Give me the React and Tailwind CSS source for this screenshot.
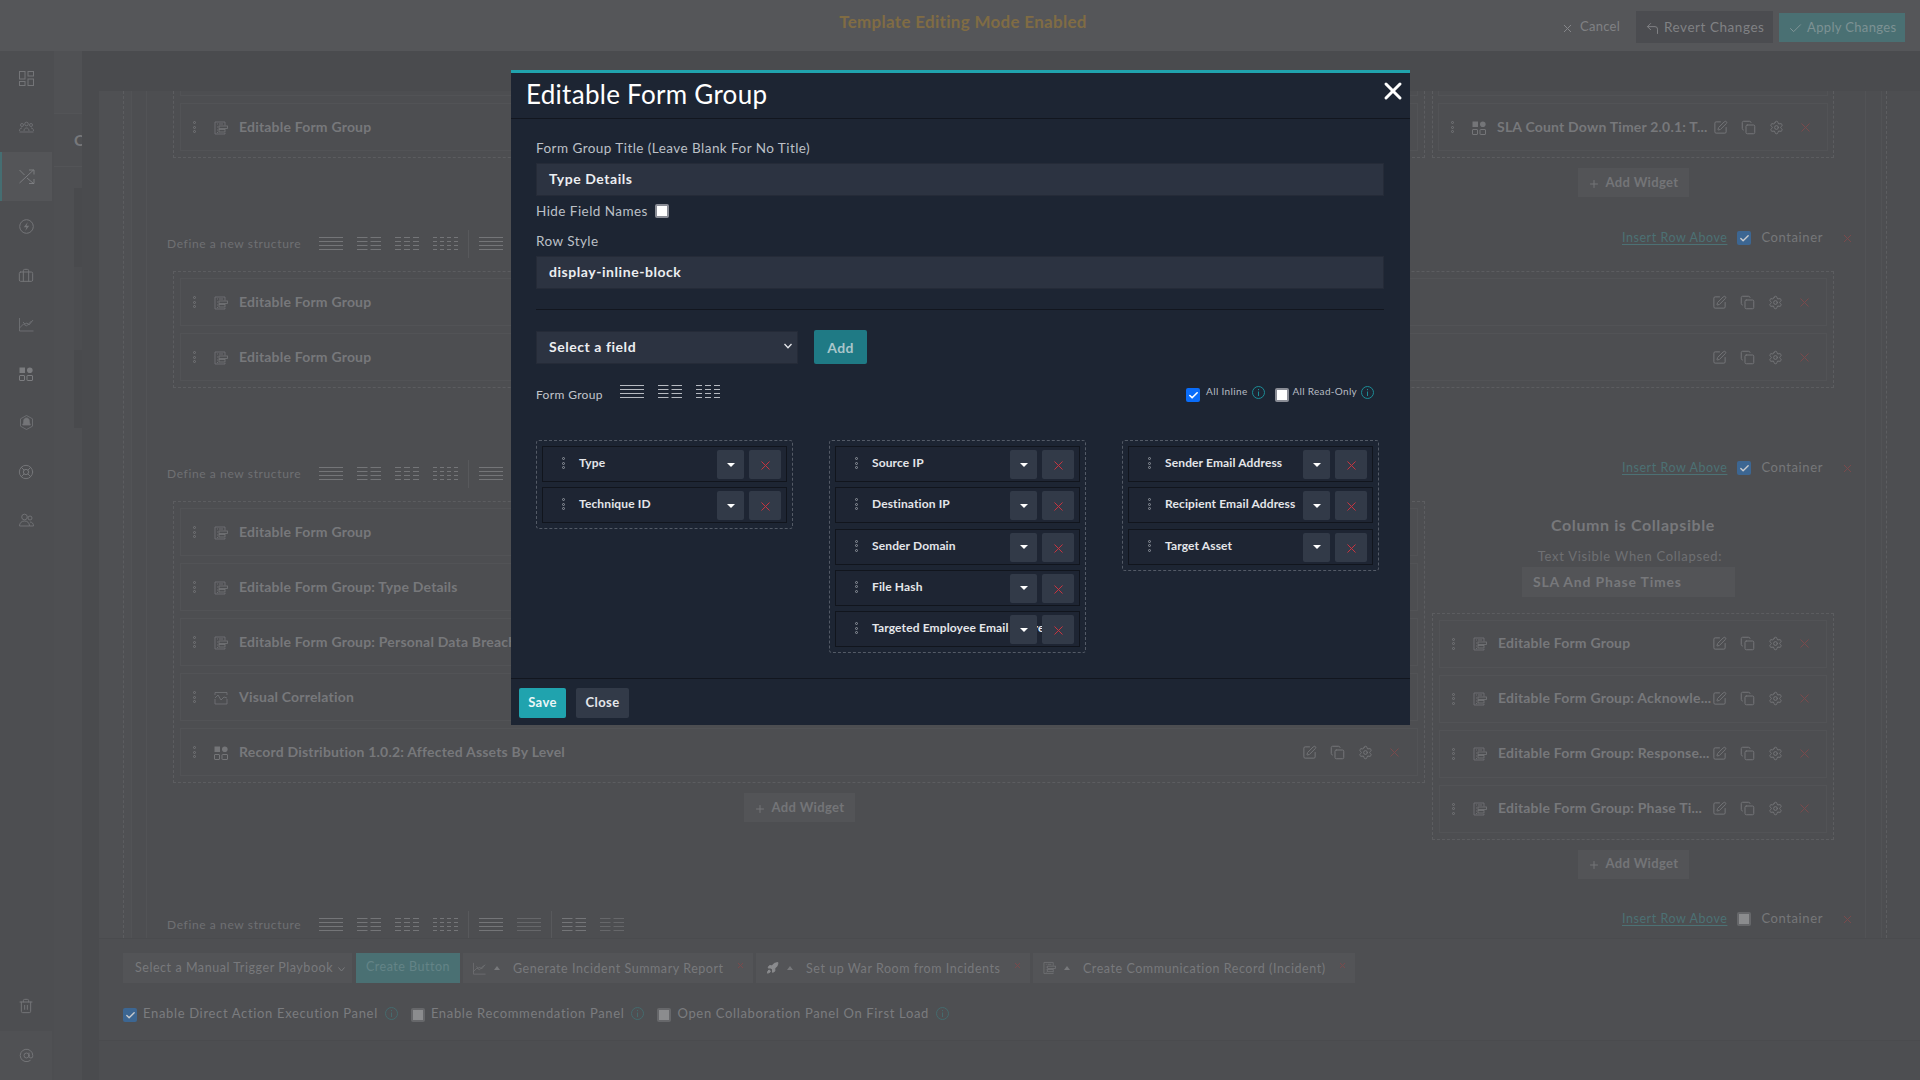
import React from 'react';
import { Briefcase, LifeBuoy, Trash2, AtSign, Rocket, Plus, X, Check, Settings, SquarePen, Copy, CornerUpLeft } from 'lucide-react';

const dim = '#747578';

// widget icon: two solid marks over two outlined boxes
const WidgetIcon = ({ color = dim }) => (
  <svg width="14" height="14" viewBox="0 0 14 14" fill="none" stroke={color}>
    <rect x="0.5" y="0.5" width="5.5" height="5.5" fill={color} stroke="none" />
    <circle cx="10.8" cy="3.2" r="2.8" fill={color} stroke="none" />
    <rect x="0.5" y="8.5" width="5" height="5" rx="0.5" />
    <rect x="8" y="8.5" width="5.5" height="5" rx="0.5" />
  </svg>
);

const FormIcon = () => (
  <svg width="14" height="14" viewBox="0 0 14 14" fill="none" stroke={dim} strokeWidth="0.8">
    <path d="M1 1h10v3.500M1 1v12h10v-1" />
    <path d="M3 3h1M5 3h4M3 6h1M3 9h1M3 11.500h1" />
    <rect x="5" y="5" width="8.500" height="2.500" />
    <rect x="5" y="8.500" width="6" height="2.500" />
  </svg>
);

const CorrelationIcon = () => (
  <svg width="14" height="14" viewBox="0 0 14 14" fill="none" stroke={dim} strokeWidth="0.8">
    <path d="M1 4V1.500h12V4M1 8v5h12V8" />
    <path d="M1 7l3-3 3 5 3-3 3 1" />
  </svg>
);

const ChartIcon = ({ size = 15 }) => (
  <svg width={size} height={size} viewBox="0 0 15 15" fill="none" stroke={dim} strokeWidth="0.8">
    <path d="M.5 1v13h14M.5 11l4-4 3 2 5-5" />
    <path d="M4 5l2 2 2-1 2 2 4-5" />
  </svg>
);

// column layout glyph used by the structure pickers
const Struct = ({ cols = 1, color = dim, size = 24 }) => {
  const gap = 3;
  const w = (size - gap * (cols - 1)) / cols;
  return (
    <svg width={size} height="14" viewBox={`0 0 ${size} 14`} stroke={color} strokeWidth="1">
      {[0.5, 4.5, 8.5, 12.5].map(y => Array.from({ length: cols }).map((_, i) => (
        <line key={`${y}-${i}`} x1={i * (w + gap)} x2={i * (w + gap) + w} y1={y} y2={y} />
      )))}
    </svg>
  );
};

const Grip = ({ color = dim, size = 3 }) => (
  <div className="flex flex-col gap-[1.500px]">
    {[0, 1, 2].map(i => <span key={i} className="block rounded-full border" style={{ width: size, height: size, borderColor: color }} />)}
  </div>
);

const InfoIcon = ({ color = '#1d8c96', size = 13 }) => (
  <svg width={size} height={size} viewBox="0 0 13 13" fill="none" stroke={color} strokeWidth="1">
    <circle cx="6.500" cy="6.500" r="6" />
    <path d="M6.500 5.500v4.500M6.500 3v1.200" />
  </svg>
);

const Box = ({ checked, dimmed }) => {
  if (dimmed) {
    return (
      <span className={`w-[14px] h-[14px] rounded-[2px] flex items-center justify-center shrink-0 ${checked ? 'bg-[#3c6692]' : 'bg-[#8b8c8e] border-2 border-[#66676a]'}`}>
        {checked && <Check size={11} strokeWidth={3} color="#c9cacc" />}
      </span>
    );
  }
  return (
    <span className={`w-[14px] h-[14px] rounded-[2px] flex items-center justify-center shrink-0 ${checked ? 'bg-[#0a6dfa]' : 'bg-white border-2 border-[#8a8d96]'}`}>
      {checked && <Check size={11} strokeWidth={3.500} color="#fff" />}
    </span>
  );
};

const Actions = ({ pr = 'pr-[14px]' }) => (
  <div className={`ml-auto flex items-center gap-[13px] shrink-0 ${pr}`}>
    <SquarePen size={15} strokeWidth={1} absoluteStrokeWidth color={dim} />
    <Copy size={15} strokeWidth={1} absoluteStrokeWidth color={dim} />
    <Settings size={15} strokeWidth={1} absoluteStrokeWidth color={dim} />
    <X size={15} strokeWidth={1} absoluteStrokeWidth color="#7a4a4c" className="ml-[1px]" />
  </div>
);

const Card = ({ title, icon = <FormIcon />, actions = true, pr }) => (
  <div className="h-[48px] border border-[#525356] flex items-center shrink-0">
    <div className="ml-[12px] w-[21px] shrink-0"><Grip /></div>
    <div className="w-[14px] h-[14px] shrink-0 mt-[1px]">{icon}</div>
    <span className="ml-[11px] text-[14px] font-bold tracking-[0.2px] text-[#77787b] whitespace-nowrap shrink-0 -mt-[2px]">{title}</span>
    {actions && <Actions pr={pr} />}
  </div>
);

const AddWidget = () => (
  <div className="mx-auto w-[111px] h-[29px] bg-[#535457] flex items-center justify-center gap-[6px] text-[13px] font-bold tracking-[0.35px] text-[#747578]">
    <Plus size={12} strokeWidth={1} absoluteStrokeWidth color={dim} className="mt-[2px]" /> Add Widget
  </div>
);

// "Define a new structure" strip, with the row options on its right
const DefineRow = ({ checked }) => (
  <div className="h-[28px] flex items-center pl-[20px] pr-[11px] shrink-0">
    <span className="text-[12px] tracking-[0.62px] text-[#6f7073] w-[152px] shrink-0">Define a new structure</span>
    <div className="flex items-center gap-[14px] h-[28px]">
      <Struct cols={1} /><Struct cols={2} /><Struct cols={3} /><Struct cols={4} size={25} />
      <span className="w-px h-full bg-[#58595c] -mx-[4px]" />
      <Struct cols={1} /><Struct cols={1} color="#66676a" />
      <span className="w-px h-full bg-[#58595c] -mx-[4px]" />
      <Struct cols={2} /><Struct cols={2} color="#66676a" />
    </div>
    <div className="ml-auto flex items-center pb-[12px]">
      <span className="text-[12.500px] tracking-[0.55px] text-[#4c7174] underline underline-offset-2">Insert Row Above</span>
      <span className="ml-[10px]"><Box checked={checked} dimmed /></span>
      <span className="ml-[10px] text-[13px] tracking-[0.6px] text-[#767779]">Container</span>
      <X size={13} strokeWidth={1} absoluteStrokeWidth color="#7a4a4c" className="ml-[18px]" />
    </div>
  </div>
);

const sideTop = [
  <svg width="15" height="15" viewBox="0 0 15 15" fill="none" stroke={dim}><rect x=".5" y=".5" width="5.500" height="7.500" /><rect x="9" y=".5" width="5.500" height="4.500" /><rect x=".5" y="10.500" width="5.500" height="4" /><rect x="9" y="8" width="5.500" height="6.500" /></svg>,
  <svg width="15" height="15" viewBox="0 0 15 15" fill="none" stroke={dim} strokeWidth=".8"><circle cx="3" cy="5" r="1.500" /><circle cx="7.500" cy="4" r="1.800" /><circle cx="12" cy="5" r="1.500" /><path d="M.5 11c0-2 1-3 2.500-3M5 11c0-2 1-3 2.500-3s2.500 1 2.500 3M12 8c1.500 0 2.500 1 2.500 3M.5 12h14" /></svg>,
  <svg width="16" height="15" viewBox="0 0 16 15" fill="none" stroke="#808184" strokeWidth=".9"><path d="M.5 1l5 5M8 9l6.500 5.500M.5 14l14-13M10 1h5v4.500M15 10v4.500h-5" /></svg>,
  <svg width="15" height="15" viewBox="0 0 15 15" fill="none" stroke={dim}><circle cx="7.500" cy="7.500" r="6.800" /><path d="M8.800 3L4.800 8.300h2.700L6.200 12l4-5.300H7.500z" fill={dim} stroke="none" /></svg>,
  <Briefcase size={16} strokeWidth={1} absoluteStrokeWidth color={dim} />,
  <ChartIcon />,
  <WidgetIcon color="#7b7c7f" />,
  <svg width="15" height="15" viewBox="0 0 15 15" fill="none" stroke={dim} strokeWidth=".8"><path d="M7.500.5l6 3.300v7.400l-6 3.300-6-3.300V3.800z" /><path d="M7.500 3c2 0 2.800 1.500 2.800 3.500s1 2.500 1 3.500h-7.600c0-1 1-1.500 1-3.500S5.500 3 7.500 3z" fill={dim} /></svg>,
  <LifeBuoy size={16} strokeWidth={1} absoluteStrokeWidth color={dim} />,
  <svg width="15" height="15" viewBox="0 0 15 15" fill="none" stroke={dim} strokeWidth=".9"><circle cx="5.500" cy="4" r="2.800" /><circle cx="11" cy="5" r="2" /><path d="M.5 13c0-3 2-5 5-5s5 2 5 5zM11 9c2 0 3.500 1.500 3.500 4h-4" /></svg>,
];

const Bar = ({ children, className = '' }) => (
  <div className={`h-[30px] bg-[#535457] flex items-center text-[12.500px] tracking-[0.55px] text-[#78797c] ${className}`}>{children}</div>
);

const Chip = ({ icon, label, w }) => (
  <Bar className={w}>
    <span className="ml-[10px] w-[13px] flex justify-center">{icon}</span>
    <span className="ml-[8px] border-x-[3.500px] border-b-[4px] border-x-transparent border-b-[#77787b]" />
    <span className="ml-[13px] mt-[2px] whitespace-nowrap">{label}</span>
    <X size={9} strokeWidth={1} absoluteStrokeWidth color="#7a4a4c" className="ml-auto mr-[8px] -mt-[5px]" />
  </Bar>
);

const Toggle = ({ checked, label, info = true, className = '' }) => (
  <div className={`flex items-center gap-[6px] ${className}`}>
    <span className="mt-[3px]"><Box checked={checked} dimmed /></span>
    <span className="text-[13px] tracking-[0.66px] text-[#7b7c7f] whitespace-nowrap">{label}</span>
    {info && <span className="ml-[1px]"><InfoIcon color="#456b6e" /></span>}
  </div>
);

// field row inside a form group column
const Field = ({ label }) => (
  <div className="h-[36px] border border-[#11151d] bg-[#1e2533] flex items-start relative overflow-hidden">
    <div className="ml-[19px] mt-[10px] w-[17px] shrink-0"><Grip color="#8e939c" size={3} /></div>
    <span className="mt-[7px] text-[12px] font-bold tracking-[0.13px] text-[#e4e6ea] whitespace-nowrap">{label}</span>
    <div className="absolute right-[5px] top-[3px] flex gap-[5px]">
      <span className="w-[27px] h-[29px] bg-[#323a48] rounded-[2px] flex items-center justify-center">
        <span className="border-x-[4px] border-t-[4px] border-x-transparent border-t-white" />
      </span>
      <span className="w-[32px] h-[29px] bg-[#323a48] rounded-[2px] flex items-center justify-center">
        <X size={15} strokeWidth={1} absoluteStrokeWidth color="#c8343f" className="mt-[2px]" />
      </span>
    </div>
  </div>
);

const FieldCol = ({ fields }) => (
  <div className="w-[257px] self-start border border-dashed border-[#535a66] rounded-[3px] p-[5px] flex flex-col gap-[5.250px]">
    {fields.map(f => <Field key={f} label={f} />)}
  </div>
);

const inputCls = 'h-[33px] bg-[#2c3341] border border-[#252b38] flex items-center pl-[12px] pb-[2px] text-[14px] font-bold tracking-[0.55px] text-[#eceef1]';
const labelCls = 'h-[20px] leading-[20px] text-[13.500px] tracking-[0.45px] text-[#bcc0c7]';

const Modal = () => (
  <div className="absolute left-[511px] top-[70px] w-[899px] h-[655px] bg-[#1d2533] border-t-[3px] border-[#20a3ae] flex flex-col">
    <div className="h-[46px] border-b border-[#12161f] flex items-center pl-[15px] pr-[3px] shrink-0">
      <span className="text-[26px] tracking-[0.28px] text-white -mt-[2px]">Editable Form Group</span>
      <X size={28} strokeWidth={3} absoluteStrokeWidth color="#fff" className="ml-auto -mt-[10px]" />
    </div>
    <div className="flex-1 px-[25px] pt-[19px]">
      <div className={labelCls}>Form Group Title (Leave Blank For No Title)</div>
      <div className={`${inputCls} mt-[5px] w-[848px]`}>Type Details</div>
      <div className="mt-[5px] flex items-center gap-[7px] h-[20px]">
        <span className={labelCls}>Hide Field Names</span><Box />
      </div>
      <div className={`${labelCls} mt-[10px]`}>Row Style</div>
      <div className={`${inputCls} mt-[5px] w-[848px]`}>display-inline-block</div>
      <div className="mt-[20px] h-px w-[848px] bg-[#12161f]" />
      <div className="mt-[20px] flex items-center gap-[16px]">
        <div className={`${inputCls} w-[262px]`}>
          Select a field
          <svg className="ml-auto mr-[5px]" width="8" height="6" viewBox="0 0 8 6" fill="none" stroke="#e4e6ea" strokeWidth="1.300"><path d="M.5 1L4 4.800 7.500 1" /></svg>
        </div>
        <div className="w-[53px] h-[34px] bg-[#1f7a85] rounded-[2px] flex items-center justify-center text-[14px] font-bold tracking-[0.4px] text-[#a9c6ca]">Add</div>
      </div>
      <div className="mt-[16px] h-[25px] w-[848px] flex items-start">
        <span className="mt-[6px] text-[12px] tracking-[0.35px] text-[#c2c6cc] w-[84px]">Form Group</span>
        <div className="mt-[5px] flex gap-[14px]">
          <Struct cols={1} color="#b6bac1" /><Struct cols={2} color="#b6bac1" /><Struct cols={3} color="#b6bac1" />
        </div>
        <div className="ml-auto mr-[10px] flex items-start mt-[8px]">
          <Box checked />
          <span className="ml-[6px] -mt-[4px] text-[10px] tracking-[0.35px] text-[#b7bcc3]">All Inline</span>
          <span className="ml-[4px] -mt-[2px]"><InfoIcon /></span>
          <span className="ml-[10px]"><Box /></span>
          <span className="ml-[4px] -mt-[4px] text-[10px] tracking-[0.3px] text-[#b7bcc3]">All Read-Only</span>
          <span className="ml-[4px] -mt-[2px]"><InfoIcon /></span>
        </div>
      </div>
      <div className="mt-[35px] flex gap-[36px]">
        <FieldCol fields={['Type', 'Technique ID']} />
        <FieldCol fields={['Source IP', 'Destination IP', 'Sender Domain', 'File Hash', 'Targeted Employee Email Address']} />
        <FieldCol fields={['Sender Email Address', 'Recipient Email Address', 'Target Asset']} />
      </div>
    </div>
    <div className="h-[47px] border-t border-[#12161f] shrink-0 flex items-start pt-[9px] pl-[8px] gap-[10px]">
      <span className="w-[47px] h-[30px] bg-[#20a3ae] rounded-[2px] flex items-center justify-center text-[13px] font-bold tracking-[0.4px] text-[#eaf6f7]">Save</span>
      <span className="w-[53px] h-[30px] bg-[#323a48] rounded-[2px] flex items-center justify-center text-[13px] font-bold tracking-[0.4px] text-[#e4e6ea]">Close</span>
    </div>
  </div>
);

export default function App() {
  return (
    <div className="relative w-[1920px] h-[1080px] overflow-hidden bg-[#4d4e51] font-['Lato',sans-serif]">
      {/* top bar */}
      <div className="h-[51px] bg-[#555659] flex items-start relative">
        <span className="w-[1926px] -mr-[1926px] mt-[9px] text-center text-[17px] font-bold tracking-[0.3px] text-[#806c44]">Template Editing Mode Enabled</span>
        <div className="ml-auto flex items-start pr-[15px] pt-[11px]">
          <div className="h-[32px] flex items-center">
            <X size={13} strokeWidth={1} absoluteStrokeWidth color="#85868a" className="mt-[3px]" />
            <span className="ml-[6px] text-[13px] tracking-[0.25px] text-[#808184]">Cancel</span>
          </div>
          <div className="ml-[16px] w-[137px] h-[32px] bg-[#4b4c50] flex items-center pl-[9px] text-[13.500px] tracking-[0.55px] text-[#808184]">
            <CornerUpLeft size={15} strokeWidth={1} absoluteStrokeWidth color="#808184" className="mt-[2px]" /><span className="ml-[4px]">Revert Changes</span>
          </div>
          <div className="ml-[6px] mt-[2px] w-[126px] h-[29px] bg-[#4a7073] flex items-center pl-[9px] text-[13px] tracking-[0.35px] text-[#7d9294]">
            <Check size={15} strokeWidth={1} absoluteStrokeWidth color="#809496" className="mt-[2px]" /><span className="ml-[4px]">Apply Changes</span>
          </div>
        </div>
      </div>

      <div className="flex h-[1029px]">
        {/* nav */}
        <div className="w-[52px] shrink-0 bg-[#4d4e51] flex flex-col pt-[3px]">
          {sideTop.map((icon, i) => (
            <div key={i} className={`h-[49px] flex items-center justify-center ${i === 2 ? 'bg-[#545558] border-l-2 border-[#456e72] h-[48px] mb-[1px]' : ''}`}>{icon}</div>
          ))}
          <div className="mt-auto h-[49px] mb-[1px] flex items-center justify-center"><Trash2 size={16} strokeWidth={1} absoluteStrokeWidth color={dim} /></div>
          <div className="h-[49px] bg-[#505154] flex items-center justify-center"><AtSign size={15} strokeWidth={1} absoluteStrokeWidth color={dim} /></div>
        </div>

        {/* collapsed secondary panel */}
        <div className="w-[28px] shrink-0 ml-[2px] flex flex-col bg-[#4e4f52]">
          <div className="h-[62px] bg-[#505154] shrink-0" />
          <div className="h-[54px] border-y border-[#535457] shrink-0 flex items-center justify-end overflow-hidden">
            <span className="text-[16px] font-bold text-[#77787b] w-[8px] overflow-hidden">C</span>
          </div>
          <div className="flex-1 flex justify-end pt-[21px]">
            <div className="w-[8px] h-[240px] bg-[#494a4d] flex items-center">
              <div className="w-full h-[83px] bg-[#4c4d50]" />
            </div>
          </div>
        </div>
        <div className="w-[17px] shrink-0 bg-[#4a4b4e]" />

        <div className="flex-1 min-w-0 flex flex-col">
          <div className="h-[40px] shrink-0 bg-[#4a4b4e]" />
          <div className="h-[847px] shrink-0 overflow-hidden flex">
            <div className="w-[25px] shrink-0 border-r border-dashed border-[#5c5d60] bg-[#4f5053]" />
            <div className="w-[7px] shrink-0 bg-[#4f5053]" />
            <div className="w-[16px] shrink-0 border-x border-[#525356]" />

            {/* page rows */}
            <div className="w-[1719px] shrink-0 flex flex-col border-r border-[#525356]">
              <div className="h-[139px] shrink-0 ml-[26px] flex gap-[7px] items-start">
                <div className="w-[1252px] h-[67px] border-b border-x border-dashed border-[#5c5d60] px-[6px]">
                  <div className="h-[5px] border-b border-x border-[#525356]" />
                  <div className="mt-[7px]"><Card title="Editable Form Group" actions={false} /></div>
                </div>
                <div className="w-[402px]">
                  <div className="h-[67px] border-b border-x border-dashed border-[#5c5d60] px-[5px]">
                    <div className="h-[5px] border-b border-x border-[#525356]" />
                    <div className="mt-[7px]"><Card title="SLA Count Down Timer 2.0.1: T..." icon={<WidgetIcon />} /></div>
                  </div>
                  <div className="mt-[10px]"><AddWidget /></div>
                </div>
              </div>

              <DefineRow checked />

              <div className="ml-[26px] mt-[13px] w-[1661px] border border-dashed border-[#5c5d60] p-[6px] flex flex-col gap-[7px] shrink-0">
                <Card title="Editable Form Group" />
                <Card title="Editable Form Group" />
              </div>

              <div className="mt-[72px] shrink-0"><DefineRow checked /></div>

              <div className="ml-[26px] mt-[13px] h-[410px] flex gap-[7px] items-start shrink-0">
                <div className="w-[1252px]">
                  <div className="border border-dashed border-[#5c5d60] p-[6px] flex flex-col gap-[7px]">
                    <Card title="Editable Form Group" actions={false} />
                    <Card title="Editable Form Group: Type Details" actions={false} />
                    <Card title="Editable Form Group: Personal Data Breach" actions={false} />
                    <Card title="Visual Correlation" icon={<CorrelationIcon />} actions={false} />
                    <Card title="Record Distribution 1.0.2: Affected Assets By Level" icon={<WidgetIcon />} pr="pr-[15px]" />
                  </div>
                  <div className="mt-[10px]"><AddWidget /></div>
                </div>
                <div className="w-[402px] flex flex-col items-center">
                  <div className="mt-[12px] text-[16px] font-bold tracking-[0.6px] text-[#77787b]">Column is Collapsible</div>
                  <div className="mt-[10px] text-[13px] tracking-[0.7px] text-[#6f7073] -ml-[6px]">Text Visible When Collapsed:</div>
                  <div className="self-start ml-[90px] w-[213px] h-[30px] bg-[#535457] flex items-center pl-[11px] text-[14px] font-bold tracking-[0.8px] text-[#77787b]">SLA And Phase Times</div>
                  <div className="mt-[16px] w-full border border-dashed border-[#5c5d60] p-[6px] flex flex-col gap-[7px]">
                    <Card title="Editable Form Group" />
                    <Card title="Editable Form Group: Acknowle..." />
                    <Card title="Editable Form Group: Response..." />
                    <Card title="Editable Form Group: Phase Ti..." />
                  </div>
                  <div className="mt-[10px] w-full"><AddWidget /></div>
                </div>
              </div>

              <DefineRow />
            </div>
            <div className="w-[16px] shrink-0 border-r border-[#525356]" />
            <div className="w-[5px] shrink-0 border-r border-dashed border-[#5c5d60]" />
          </div>

          {/* trigger bar */}
          <div className="h-[103px] shrink-0 bg-[#4e4f52] border-t border-[#4a4b4e] border-b pl-[24px] pt-[14px]">
            <div className="flex gap-[3px]">
              <Bar className="w-[229px] pl-[12px]">
                Select a Manual Trigger Playbook
                <svg className="ml-[5px] mt-[2px]" width="7" height="5" viewBox="0 0 7 5" fill="none" stroke="#78797c"><path d="M.5.5L3.500 4l3-3.500" /></svg>
              </Bar>
              <div className="ml-[1px] w-[104px] h-[30px] bg-[#4a7073] flex items-center justify-center pb-[2px] text-[12.500px] tracking-[0.5px] text-[#648487]">Create Button</div>
              <Chip icon={<ChartIcon size={13} />} label="Generate Incident Summary Report" w="w-[290px]" />
              <Chip icon={<Rocket size={14} color="#8a8b8e" fill="#8a8b8e" strokeWidth={1} absoluteStrokeWidth />} label="Set up War Room from Incidents" w="w-[274px]" />
              <Chip icon={<FormIcon />} label="Create Communication Record (Incident)" w="w-[322px]" />
            </div>
            <div className="mt-[21px] flex items-center">
              <Toggle checked label="Enable Direct Action Execution Panel" />
              <Toggle label="Enable Recommendation Panel" className="ml-[13px]" />
              <Toggle label="Open Collaboration Panel On First Load" className="ml-[13px]" />
            </div>
          </div>
          <div className="flex-1" />
        </div>
      </div>

      <Modal />
    </div>
  );
}
